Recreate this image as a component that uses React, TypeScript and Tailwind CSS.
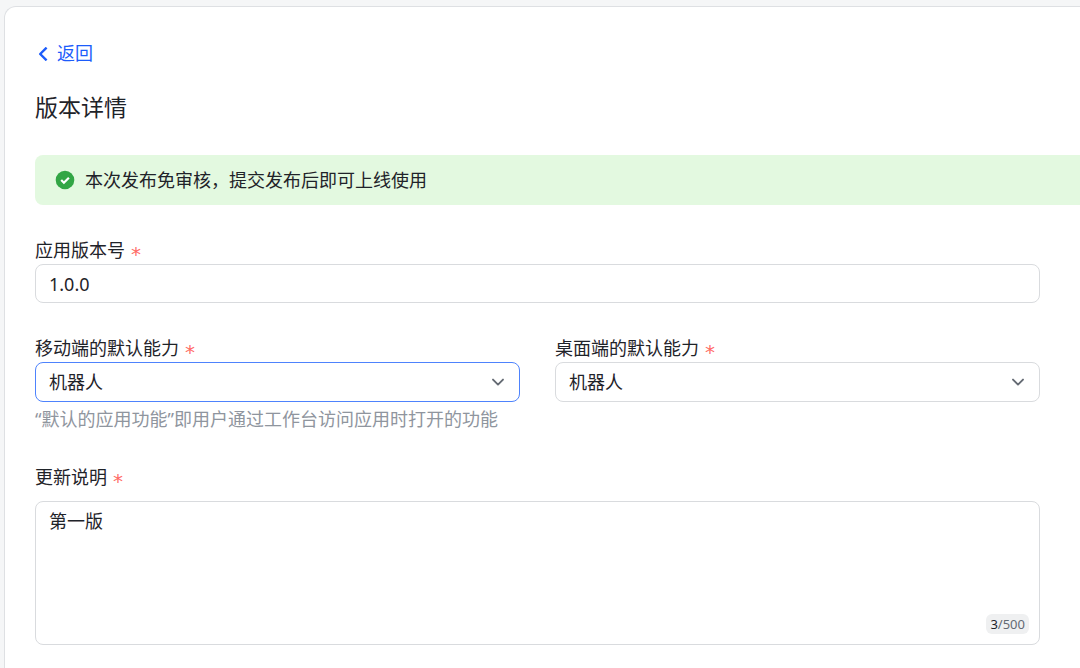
import { useState } from 'react';
import type { ReactNode } from 'react';

function Label({ htmlFor, children }: { htmlFor: string; children: ReactNode }) {
  return (
    <label htmlFor={htmlFor} className="flex h-[27px] items-center gap-1.5 text-[18px] leading-[27px]">
      {children}
      <span aria-hidden="true" className="pt-1.5 font-['DejaVu_Sans',sans-serif] text-[20px] leading-5 text-[#ff6b66]">*</span>
    </label>
  );
}

function SelectField({ id, label, active, hint }: { id: string; label: string; active?: boolean; hint?: string }) {
  return (
    <div className="min-w-0 flex-1">
      <Label htmlFor={id}>{label}</Label>
      <div className="relative">
        <select
          id={id}
          defaultValue="bot"
          className={`block h-10 w-full appearance-none rounded-lg border bg-white pr-10 pl-[13px] text-[18px] outline-none ${active ? 'border-[#4e83fd]' : 'border-[#d9dbde]'}`}
        >
          <option value="bot">机器人</option>
        </select>
        <svg viewBox="0 0 14 14" className="pointer-events-none absolute top-[13px] right-[15px] size-3.5 text-[#646a73]" fill="none" stroke="currentColor" strokeWidth="1.9" strokeLinecap="round" strokeLinejoin="round" aria-hidden="true">
          <path d="M2 4.6l5 5 5-5" />
        </svg>
      </div>
      {hint && <p className="mt-1 text-[18px] leading-[27px] text-[#8f959e]">{hint}</p>}
    </div>
  );
}

export default function App() {
  const [version, setVersion] = useState('1.0.0');
  const [notes, setNotes] = useState('第一版');

  return (
    <div className="flex min-h-screen flex-col bg-[#f5f6f7] pt-1.5 pl-1 font-['Noto_Sans','Noto_Sans_CJK_SC',sans-serif] text-[#1f2329]">
      <main className="flex-1 rounded-tl-xl border-t border-l border-[#dee0e3] bg-white pt-[33px] pl-[30px]">
        <a href="#" className="inline-flex items-center gap-2 text-[18px] leading-[27px] text-[#1c5cfb]">
          <svg viewBox="0 0 14 14" className="size-3.5" fill="none" stroke="currentColor" strokeWidth="2.4" strokeLinecap="butt" strokeLinejoin="round" aria-hidden="true">
            <path d="M11.6 .6L5.2 7l6.4 6.4" />
          </svg>
          返回
        </a>
        <h1 className="mt-6 text-[23px] leading-8">版本详情</h1>

        <div role="status" className="mt-8 flex h-[50px] items-center gap-2.5 rounded-l-lg bg-[#e3f9e0] pl-5 text-[18px]">
          <svg viewBox="0 0 20 20" className="size-5 shrink-0" aria-hidden="true">
            <circle cx="10" cy="10" r="9.3" fill="#32a645" />
            <path d="M6.2 10l2.7 2.7 5-5" fill="none" stroke="#fff" strokeWidth="2.2" strokeLinejoin="miter" />
          </svg>
          <span>本次发布免审核，提交发布后即可上线使用</span>
        </div>

        <form className="mt-8 pr-10">
          <Label htmlFor="version">应用版本号</Label>
          <input
            id="version"
            value={version}
            onChange={(e) => setVersion(e.target.value)}
            className="block h-[39px] w-full rounded-lg border border-[#d9dbde] px-[13px] text-[18px] outline-none"
          />

          <div className="mt-8 flex items-start gap-[35px]">
            <SelectField id="mobile" label="移动端的默认能力" active hint="“默认的应用功能”即用户通过工作台访问应用时打开的功能" />
            <SelectField id="desktop" label="桌面端的默认能力" />
          </div>

          <div className="mt-[31px]">
            <Label htmlFor="notes">更新说明</Label>
            <div className="relative mt-2.5">
              <textarea
                id="notes"
                maxLength={500}
                value={notes}
                onChange={(e) => setNotes(e.target.value)}
                className="block h-36 w-full resize-none rounded-lg border border-[#d9dbde] px-[13px] py-1.5 text-[18px] leading-[27px] outline-none"
              />
              <span className="absolute right-[11px] bottom-[11px] rounded-md bg-[#eff0f1] px-1 text-[13px] leading-5 text-[#646a73]">
                <span className="text-[#1f2329]">{notes.length}</span>/500
              </span>
            </div>
          </div>
        </form>
      </main>
    </div>
  );
}
